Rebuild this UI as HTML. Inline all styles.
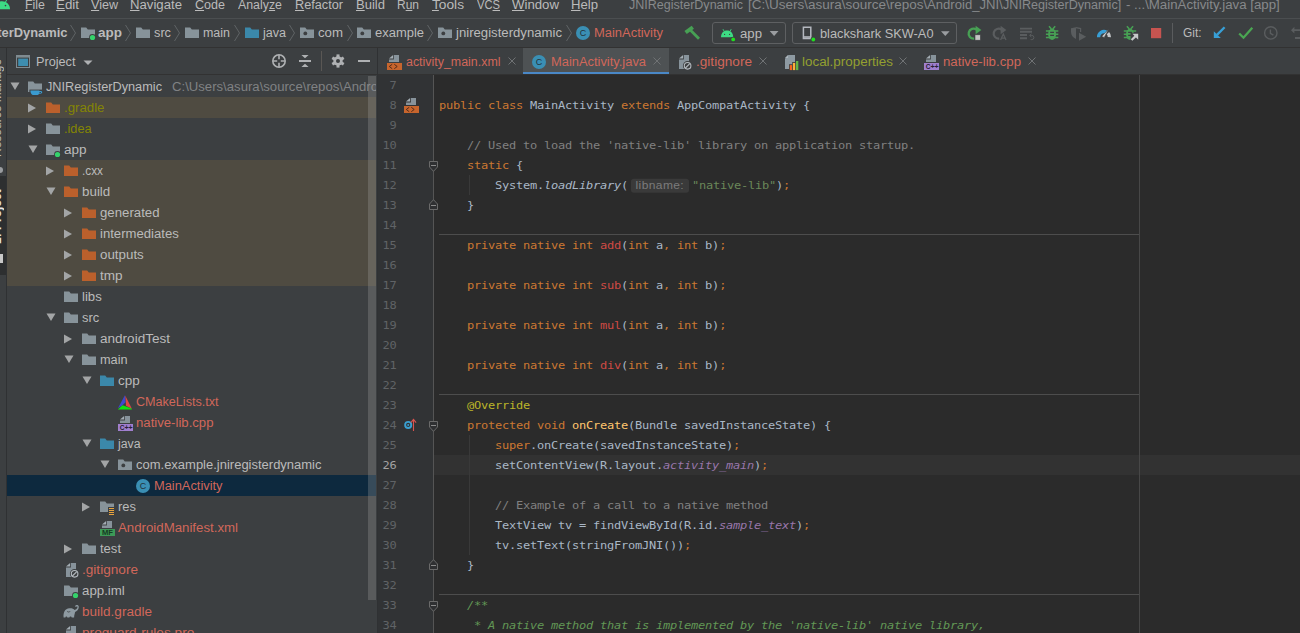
<!DOCTYPE html>
<html lang="en"><head><meta charset="utf-8"><title>JNIRegisterDynamic - MainActivity.java</title>
<style>
*{box-sizing:border-box}
html,body{margin:0;padding:0;background:#3c3f41;}
html{width:1300px;height:633px;overflow:hidden}
body{width:1300px;height:633px;overflow:hidden;position:relative;font-family:"Liberation Sans", sans-serif;font-size:12px;color:#bbbbbb}
.root{position:absolute;left:0;top:0;width:1300px;height:633px;overflow:hidden;contain:strict}
.abs{position:absolute}
.i{position:absolute;display:block;overflow:hidden}
.t{position:absolute;white-space:pre;transform-origin:0 50%;line-height:20px;height:20px}
.t.rel{position:absolute}
.t u{text-decoration:underline;text-underline-offset:1px;text-decoration-thickness:1px}
.vt{position:absolute;white-space:nowrap;font-size:12px;color:#bbbbbb;writing-mode:vertical-rl;transform:rotate(180deg);text-align:center;line-height:14px;width:14px;display:block;overflow:hidden}
.combo{border:1px solid #5e6062;border-radius:3px;background:#3c3f41}
.ln{position:absolute;left:0;width:18.6px;text-align:right;font-family:"DejaVu Sans Mono", "Liberation Mono", monospace;font-size:12px;letter-spacing:-0.224px;line-height:20px;height:20px;color:#606366;transform:scaleY(.93);transform-origin:0 14px}
.ln.cur{color:#a4a3a3}
.cl{position:absolute;left:61px;margin:0;font-family:"DejaVu Sans Mono", "Liberation Mono", monospace;font-size:12px;letter-spacing:-0.224px;line-height:20px;height:20px;color:#a9b7c6;white-space:pre;transform:scaleY(.93);transform-origin:0 14px}
.k{color:#cc7832}.c{color:#808080}.s{color:#6a8759}.it{font-style:italic}.er{color:#cf4a44}
.an{color:#bbb529}.m{color:#ffc66d}.sf{color:#9876aa;font-style:italic}.d{color:#629755;font-style:italic}
.hint{display:inline-block;font-family:"Liberation Sans", sans-serif;font-size:12px;letter-spacing:0.4px;color:#7c7c7c;background:#3a3a3a;border-radius:3px;line-height:15px;height:15px;padding:0 0 0 4.5px;margin:0 3px;width:58px;vertical-align:baseline;position:relative;top:-0.5px}
</style></head>
<body>
<div class="root">
<div class="abs" style="left:0;top:0;width:1300px;height:633px;background:#3c3f41"></div>
<svg class="i" style="left:0;top:0" width="12" height="10" viewBox="0 0 12 10"><path d="M-6 9.2 C-6 4.5 -2.5 1.2 2 1.2 C6.5 1.2 10 4.5 10 9.2z" fill="#3ddc84"/><path d="M5.2 2.6 L7.2 -1" stroke="#3ddc84" stroke-width="1"/><circle cx="5.5" cy="5.6" r=".8" fill="#3c3f41"/></svg>
<span class="t" style="left:25px;top:-5px;font-size:12px;transform:scaleX(1.0331);"><u>F</u>ile</span>
<span class="t" style="left:56px;top:-5px;font-size:12px;transform:scaleX(1.1109);"><u>E</u>dit</span>
<span class="t" style="left:91px;top:-5px;font-size:12px;transform:scaleX(1.0460);"><u>V</u>iew</span>
<span class="t" style="left:130px;top:-5px;font-size:12px;transform:scaleX(1.0976);"><u>N</u>avigate</span>
<span class="t" style="left:195px;top:-5px;font-size:12px;transform:scaleX(1.0452);"><u>C</u>ode</span>
<span class="t" style="left:238px;top:-5px;font-size:12px;transform:scaleX(1.0300);">Analy<u>z</u>e</span>
<span class="t" style="left:295px;top:-5px;font-size:12px;transform:scaleX(1.0582);"><u>R</u>efactor</span>
<span class="t" style="left:356px;top:-5px;font-size:12px;transform:scaleX(1.0860);"><u>B</u>uild</span>
<span class="t" style="left:397px;top:-5px;font-size:12px;transform:scaleX(0.9979);">R<u>u</u>n</span>
<span class="t" style="left:432px;top:-5px;font-size:12px;transform:scaleX(1.1422);"><u>T</u>ools</span>
<span class="t" style="left:477px;top:-5px;font-size:12px;transform:scaleX(0.9316);">VC<u>S</u></span>
<span class="t" style="left:512px;top:-5px;font-size:12px;transform:scaleX(1.1010);"><u>W</u>indow</span>
<span class="t" style="left:571px;top:-5px;font-size:12px;transform:scaleX(1.0937);"><u>H</u>elp</span>
<span class="t" style="left:628.7px;top:-5px;font-size:12px;color:#87898b;transform:scaleX(1.0424);">JNIRegisterDynamic</span>
<span class="t" style="left:747.8px;top:-5px;font-size:12px;color:#87898b;transform:scaleX(1.1242);">[C:\Users\asura\source\repos\</span>
<span class="t" style="left:927px;top:-5px;font-size:12px;color:#87898b;transform:scaleX(1.0926);">Android_JNI\</span>
<span class="t" style="left:1002.8px;top:-5px;font-size:12px;color:#87898b;transform:scaleX(1.0488);">JNIRegisterDynamic]</span>
<span class="t" style="left:1126px;top:-5px;font-size:12px;color:#87898b;transform:scaleX(1.1044);">- ...\MainActivity.java [app]</span>
<div class="abs" style="left:0;top:18px;width:1300px;height:1px;background:#4b4e50"></div>
<span class="t" style="left:-58.5px;top:23px;font-size:12px;font-weight:bold;transform:scaleX(1.0752);">JNIRegisterDynamic</span>
<svg class="i" style="left:69px;top:24px" width="8" height="18" viewBox="0 0 8 18"><path d="M1.5 1 L6.5 9 L1.5 17" fill="none" stroke="#5f6365" stroke-width="1"/></svg>
<svg class="i" style="left:80px;top:25px" width="16" height="16" viewBox="0 0 16 16"><path d="M1 2.5h5.2l1.6 2H15v8.6H1z" fill="#87939a"/><circle cx="12.5" cy="12.5" r="3.4" fill="#3c3f41"/><circle cx="12.5" cy="12.5" r="2.6" fill="#34d36b"/></svg>
<span class="t" style="left:98px;top:23px;font-size:12px;font-weight:bold;transform:scaleX(1.1245);">app</span>
<svg class="i" style="left:124px;top:24px" width="8" height="18" viewBox="0 0 8 18"><path d="M1.5 1 L6.5 9 L1.5 17" fill="none" stroke="#5f6365" stroke-width="1"/></svg>
<svg class="i" style="left:135px;top:25px" width="16" height="16" viewBox="0 0 16 16"><path d="M1 2.5h5.2l1.6 2H15v8.6H1z" fill="#87939a"/></svg>
<span class="t" style="left:154px;top:23px;font-size:12px;transform:scaleX(1.0625);">src</span>
<svg class="i" style="left:173px;top:24px" width="8" height="18" viewBox="0 0 8 18"><path d="M1.5 1 L6.5 9 L1.5 17" fill="none" stroke="#5f6365" stroke-width="1"/></svg>
<svg class="i" style="left:184px;top:25px" width="16" height="16" viewBox="0 0 16 16"><path d="M1 2.5h5.2l1.6 2H15v8.6H1z" fill="#87939a"/></svg>
<span class="t" style="left:203px;top:23px;font-size:12px;transform:scaleX(1.0378);">main</span>
<svg class="i" style="left:233px;top:24px" width="8" height="18" viewBox="0 0 8 18"><path d="M1.5 1 L6.5 9 L1.5 17" fill="none" stroke="#5f6365" stroke-width="1"/></svg>
<svg class="i" style="left:244px;top:25px" width="16" height="16" viewBox="0 0 16 16"><path d="M1 2.5h5.2l1.6 2H15v8.6H1z" fill="#3b88aa"/></svg>
<span class="t" style="left:263px;top:23px;font-size:12px;transform:scaleX(1.0447);">java</span>
<svg class="i" style="left:288px;top:24px" width="8" height="18" viewBox="0 0 8 18"><path d="M1.5 1 L6.5 9 L1.5 17" fill="none" stroke="#5f6365" stroke-width="1"/></svg>
<svg class="i" style="left:299px;top:25px" width="16" height="16" viewBox="0 0 16 16"><path d="M1 2.5h5.2l1.6 2H15v8.6H1z" fill="#87939a"/><circle cx="6.3" cy="8.4" r="1.9" fill="#3c3f41"/></svg>
<span class="t" style="left:318px;top:23px;font-size:12px;transform:scaleX(1.1027);">com</span>
<svg class="i" style="left:346px;top:24px" width="8" height="18" viewBox="0 0 8 18"><path d="M1.5 1 L6.5 9 L1.5 17" fill="none" stroke="#5f6365" stroke-width="1"/></svg>
<svg class="i" style="left:356px;top:25px" width="16" height="16" viewBox="0 0 16 16"><path d="M1 2.5h5.2l1.6 2H15v8.6H1z" fill="#87939a"/><circle cx="6.3" cy="8.4" r="1.9" fill="#3c3f41"/></svg>
<span class="t" style="left:375px;top:23px;font-size:12px;transform:scaleX(1.0803);">example</span>
<svg class="i" style="left:426px;top:24px" width="8" height="18" viewBox="0 0 8 18"><path d="M1.5 1 L6.5 9 L1.5 17" fill="none" stroke="#5f6365" stroke-width="1"/></svg>
<svg class="i" style="left:437px;top:25px" width="16" height="16" viewBox="0 0 16 16"><path d="M1 2.5h5.2l1.6 2H15v8.6H1z" fill="#87939a"/><circle cx="6.3" cy="8.4" r="1.9" fill="#3c3f41"/></svg>
<span class="t" style="left:456px;top:23px;font-size:12px;transform:scaleX(1.0961);">jniregisterdynamic</span>
<svg class="i" style="left:565px;top:24px" width="8" height="18" viewBox="0 0 8 18"><path d="M1.5 1 L6.5 9 L1.5 17" fill="none" stroke="#5f6365" stroke-width="1"/></svg>
<svg class="i" style="left:575px;top:25px" width="16" height="16" viewBox="0 0 16 16"><circle cx="8" cy="8" r="7" fill="#3a8fb4"/><text x="8" y="11.3" text-anchor="middle" font-family='"Liberation Sans",sans-serif' font-size="9" fill="#23323a">C</text></svg>
<span class="t" style="left:594px;top:23px;font-size:12px;color:#d1675a;transform:scaleX(1.0779);">MainActivity</span>
<div class="abs combo" style="left:712px;top:22px;width:74px;height:22px"></div>
<div class="abs combo" style="left:792px;top:22px;width:165px;height:22px"></div>
<span class="t" style="left:739.5px;top:24px;font-size:12.5px;transform:scaleX(1.0547);">app</span>
<span class="t" style="left:819.5px;top:24px;font-size:12.5px;transform:scaleX(1.0232);">blackshark SKW-A0</span>
<span class="t" style="left:1182.5px;top:23px;font-size:12.5px;transform:scaleX(0.9510);">Git:</span>
<svg class="i" style="left:676px;top:19px" width="624" height="28" viewBox="676 19 624 28">
<path d="M685.6 32.6 L692.8 27.2" stroke="#47a054" stroke-width="3.8"/><path d="M689.8 29.6 L699 38.8" stroke="#47a054" stroke-width="2.8"/>
<path d="M721 37.2 C721 33.2 723.6 30.6 727.1 30.6 C730.6 30.6 733.2 33.2 733.2 37.2z" fill="#3ddc84"/>
<path d="M724.4 31.6 L723 29.2 M729.8 31.6 L731.2 29.2" stroke="#3ddc84" stroke-width=".9"/>
<circle cx="724.6" cy="34.4" r=".6" fill="#3c3f41"/><circle cx="729.6" cy="34.4" r=".6" fill="#3c3f41"/>
<circle cx="733.2" cy="39.4" r="2.7" fill="#3c3f41"/><circle cx="733.2" cy="39.4" r="1.9" fill="#1fe01f"/>
<path d="M769.7 31 H778.5 L774.1 36z" fill="#9a9da0"/>
<path d="M803.4 27.2 H810.8 V38.6 H803.4z" fill="none" stroke="#b4b8bf" stroke-width="1.5"/><path d="M803 37 H811" stroke="#b4b8bf" stroke-width="1.6"/>
<circle cx="813.3" cy="39.5" r="2.7" fill="#3c3f41"/><circle cx="813.3" cy="39.5" r="1.9" fill="#1fe01f"/>
<path d="M941 31.2 H949.6 L945.3 36z" fill="#9a9da0"/>
<path d="M976.6 29.6 A5 5 0 1 0 974.2 38.6" fill="none" stroke="#47a054" stroke-width="2.3"/><path d="M975.6 25.8 L981.4 30 L975.6 34.2z" fill="#47a054"/>
<rect x="975" y="34.8" width="5.4" height="5.4" fill="#c4c4c4" stroke="#3c3f41" stroke-width=".6"/>
<path d="M1001.6 29.6 A5 5 0 1 0 999.2 38.6" fill="none" stroke="#5a5d5f" stroke-width="2.2"/><path d="M1000.6 25.8 L1006.4 30 L1000.6 34.2z" fill="#5a5d5f"/>
<path d="M1000.6 40 L1003.3 34 L1006 40 M1001.6 38.2 H1005" stroke="#5a5d5f" stroke-width="1.3" fill="none"/>
<path d="M1020 28.6 H1032 M1020 31.8 H1032 M1020 35 H1027 M1020 38.2 H1027" stroke="#5a5d5f" stroke-width="1.9"/>
<path d="M1030 35.4 H1031.8 A2 2 0 0 1 1031.8 39.6 H1030.6 M1031.4 33.8 L1029.6 35.4 L1031.4 37" stroke="#5a5d5f" stroke-width="1" fill="none"/>
<g transform="translate(1052.1 34.3) scale(1.0)"><path d="M-3.1 -8.1 L-0.7 -5.3 M3.1 -8.1 L0.7 -5.3" stroke="#47a054" stroke-width="1.5" fill="none"/><path d="M-6.2 -3.4 H6.2 M-6.2 -0.1 H6.2 M-6.2 3.2 H6.2" stroke="#47a054" stroke-width="1.5"/><ellipse cx="0" cy="0" rx="4" ry="5.7" fill="#47a054"/><path d="M-1.9 -1.9 H1.9 M-1.9 1.1 H1.9" stroke="#3c3f41" stroke-width="1.2"/></g>
<path d="M1071 28.2 L1076 27.2 V39 C1073 37.8 1071 35.2 1071 32z" fill="#5a5d5f"/><path d="M1076 27.6 L1080.6 28.6 V32" stroke="#5a5d5f" stroke-width="1.2" fill="none"/>
<path d="M1079 32.8 L1086.2 36.8 L1079 40.8z" fill="#5a5d5f"/>
<path d="M1098.6 37.2 A5.4 5.4 0 0 1 1106.5 32.2" fill="none" stroke="#389fd6" stroke-width="3.3"/>
<path d="M1107.9 33.2 A5.4 5.4 0 0 1 1109.4 37.2" fill="none" stroke="#c4c6c8" stroke-width="3.3"/>
<path d="M1101.8 36.4 L1104.2 37.4 L1108.6 29.2z" fill="#d0d2d4" stroke="#3c3f41" stroke-width=".5"/>
<g transform="translate(1130 34.3) scale(1.0)"><path d="M-3.1 -8.1 L-0.7 -5.3 M3.1 -8.1 L0.7 -5.3" stroke="#47a054" stroke-width="1.5" fill="none"/><path d="M-6.2 -3.4 H6.2 M-6.2 -0.1 H6.2 M-6.2 3.2 H6.2" stroke="#47a054" stroke-width="1.5"/><ellipse cx="0" cy="0" rx="4" ry="5.7" fill="#47a054"/><path d="M-1.9 -1.9 H1.9 M-1.9 1.1 H1.9" stroke="#3c3f41" stroke-width="1.2"/></g>
<path d="M1130.6 32.8 H1140 V42 H1130.6z" fill="#3c3f41"/>
<path d="M1131.6 40 L1136.4 35.4" stroke="#c6c8ca" stroke-width="2.2"/><path d="M1132.4 33.8 H1138.2 V39.8z" fill="#c6c8ca"/>
<rect x="1151" y="28" width="10.2" height="10.2" fill="#c75450"/>
<rect x="1172" y="23" width="1" height="20" fill="#5a5c5e"/>
<path d="M1224.6 27.3 L1217 34.9" stroke="#389fd6" stroke-width="2.3"/><path d="M1213.8 31.2 V38.1 H1220.8z" fill="#389fd6"/>
<path d="M1239.2 33.5 L1243.5 37.7 L1252.3 27.7" stroke="#4aa652" stroke-width="2.3" fill="none"/>
<circle cx="1270.8" cy="32.9" r="6.2" fill="none" stroke="#5a5d5f" stroke-width="1.4"/><path d="M1270.4 29.6 V33.3 L1273.4 35.2" stroke="#5a5d5f" stroke-width="1.4" fill="none"/>
<path d="M1291 30.2 L1294.4 26.8 V33.6z" fill="#5a5d5f"/><path d="M1294 30.2 H1300 M1295 38 H1300" stroke="#5a5d5f" stroke-width="1.8"/>
</svg>
<div class="abs" style="left:0;top:47px;width:1300px;height:1px;background:#323232"></div>
<div class="abs" style="left:0;top:48px;width:6px;height:585px;background:#3c3f41;overflow:hidden"><div class="abs" style="left:0;top:128px;width:6px;height:99px;background:#2d2f30"></div><span class="vt" style="top:12px;left:-10px;height:97px">Resource Manager</span><span class="vt" style="top:140px;left:-10px;height:57px;color:#e6e6e6;font-weight:bold">1: Project</span><div class="abs" style="left:-3px;top:119px;width:6px;height:6px;border-radius:3px;background:#9a9da0"></div><div class="abs" style="left:-2px;top:206px;width:5px;height:9px;background:#c8c8c8"></div></div>
<div class="abs" style="left:6px;top:48px;width:1px;height:585px;background:#2f3133"></div>
<svg class="i" style="left:15px;top:54px" width="16" height="16" viewBox="15 54 16 16"><rect x="16.5" y="55.5" width="13" height="12" fill="none" stroke="#7f8b91" stroke-width="1"/><rect x="16" y="55" width="14" height="2.6" fill="#7f8b91"/><rect x="18.2" y="58.6" width="9.8" height="7.4" fill="#3e8eb0"/></svg>
<span class="t" style="left:35.5px;top:51.5px;font-size:12px;transform:scaleX(1.0573);">Project</span>
<svg class="i" style="left:83.0px;top:60.0px" width="10" height="6" viewBox="0 0 10 6"><path d="M0.5 0.5 H9.5 L5.0 5z" fill="#afb1b3"/></svg>
<svg class="i" style="left:256px;top:48px" width="121" height="26" viewBox="256 48 121 26"><circle cx="279" cy="61" r="6.2" fill="none" stroke="#afb1b3" stroke-width="1.6"/><path d="M279 55V59.2M279 62.8V67M273 61H277.2M280.8 61H285" stroke="#afb1b3" stroke-width="1.6"/><path d="M299 61H311" stroke="#afb1b3" stroke-width="2"/><path d="M301.4 55H308.6L305 58.2z M301.4 67H308.6L305 63.8z" fill="#afb1b3"/><rect x="321" y="51" width="1" height="20" fill="#5a5754"/><g fill="#afb1b3"><circle cx="338" cy="61" r="4.7"/><rect x="336.5" y="54.4" width="3" height="3.4" transform="rotate(0 338 61)"/><rect x="336.5" y="54.4" width="3" height="3.4" transform="rotate(60 338 61)"/><rect x="336.5" y="54.4" width="3" height="3.4" transform="rotate(120 338 61)"/><rect x="336.5" y="54.4" width="3" height="3.4" transform="rotate(180 338 61)"/><rect x="336.5" y="54.4" width="3" height="3.4" transform="rotate(240 338 61)"/><rect x="336.5" y="54.4" width="3" height="3.4" transform="rotate(300 338 61)"/></g><circle cx="338" cy="61" r="2" fill="#3c3f41"/><rect x="358" y="60" width="12" height="2" fill="#afb1b3"/></svg>
<div class="abs" style="left:7px;top:74px;width:370px;height:1px;background:#323232"></div>
<div class="abs" style="left:7px;top:97px;width:369px;height:21px;background:#4f4b41"></div>
<div class="abs" style="left:7px;top:160px;width:369px;height:126px;background:#4f4b41"></div>
<div class="abs" style="left:7px;top:475px;width:369px;height:21px;background:#0d293e"></div>
<svg class="i" style="left:10.0px;top:82.0px" width="10" height="9" viewBox="0 0 10 9"><path d="M0.5 0.5 H9.5 L5.0 8z" fill="#a3a5a6"/></svg>
<svg class="i" style="left:27px;top:78.5px" width="16" height="16" viewBox="0 0 16 16"><path d="M1 2.5h5.2l1.6 2H15v8.6H1z" fill="#87939a"/><path d="M2.4 10.6H16V16H2.4z" fill="#3c3f41"/><path d="M3.4 11.6H12.4V12H13.6C15.8 12 15.8 14.8 13.2 14.8H12.2C11.6 15.8 10.4 16.4 7.9 16.4C5 16.4 3.4 15 3.4 11.6z M12.5 12.9V14H13.4C14.2 14 14.2 12.9 13.4 12.9z" fill="#3a9bd0" fill-rule="evenodd"/></svg>
<span class="t" style="left:46px;top:76.5px;font-size:12px;transform:scaleX(1.0607);">JNIRegisterDynamic</span>
<svg class="i" style="left:27px;top:102.5px" width="10" height="10" viewBox="0 0 10 10"><path d="M1 0.5 L9 5 L1 9.5z" fill="#a3a5a6"/></svg>
<svg class="i" style="left:45px;top:99.5px" width="16" height="16" viewBox="0 0 16 16"><path d="M1 2.5h5.2l1.6 2H15v8.6H1z" fill="#bb602c"/></svg>
<span class="t" style="left:64px;top:97.5px;font-size:12px;color:#848504;transform:scaleX(1.1034);">.gradle</span>
<svg class="i" style="left:27px;top:123.5px" width="10" height="10" viewBox="0 0 10 10"><path d="M1 0.5 L9 5 L1 9.5z" fill="#a3a5a6"/></svg>
<svg class="i" style="left:45px;top:120.5px" width="16" height="16" viewBox="0 0 16 16"><path d="M1 2.5h5.2l1.6 2H15v8.6H1z" fill="#87939a"/></svg>
<span class="t" style="left:64px;top:118.5px;font-size:12px;color:#848504;transform:scaleX(1.0603);">.idea</span>
<svg class="i" style="left:28.0px;top:145.0px" width="10" height="9" viewBox="0 0 10 9"><path d="M0.5 0.5 H9.5 L5.0 8z" fill="#a3a5a6"/></svg>
<svg class="i" style="left:45px;top:141.5px" width="16" height="16" viewBox="0 0 16 16"><path d="M1 2.5h5.2l1.6 2H15v8.6H1z" fill="#87939a"/><circle cx="12.5" cy="12.5" r="3.4" fill="#3c3f41"/><circle cx="12.5" cy="12.5" r="2.6" fill="#34d36b"/></svg>
<span class="t" style="left:64px;top:139.5px;font-size:12px;transform:scaleX(1.1282);">app</span>
<svg class="i" style="left:45px;top:165.5px" width="10" height="10" viewBox="0 0 10 10"><path d="M1 0.5 L9 5 L1 9.5z" fill="#a3a5a6"/></svg>
<svg class="i" style="left:63px;top:162.5px" width="16" height="16" viewBox="0 0 16 16"><path d="M1 2.5h5.2l1.6 2H15v8.6H1z" fill="#bb602c"/></svg>
<span class="t" style="left:82px;top:160.5px;font-size:12px;transform:scaleX(0.9839);">.cxx</span>
<svg class="i" style="left:46.0px;top:187.0px" width="10" height="9" viewBox="0 0 10 9"><path d="M0.5 0.5 H9.5 L5.0 8z" fill="#a3a5a6"/></svg>
<svg class="i" style="left:63px;top:183.5px" width="16" height="16" viewBox="0 0 16 16"><path d="M1 2.5h5.2l1.6 2H15v8.6H1z" fill="#bb602c"/></svg>
<span class="t" style="left:82px;top:181.5px;font-size:12px;transform:scaleX(1.1160);">build</span>
<svg class="i" style="left:63px;top:207.5px" width="10" height="10" viewBox="0 0 10 10"><path d="M1 0.5 L9 5 L1 9.5z" fill="#a3a5a6"/></svg>
<svg class="i" style="left:81px;top:204.5px" width="16" height="16" viewBox="0 0 16 16"><path d="M1 2.5h5.2l1.6 2H15v8.6H1z" fill="#bb602c"/></svg>
<span class="t" style="left:100px;top:202.5px;font-size:12px;transform:scaleX(1.1009);">generated</span>
<svg class="i" style="left:63px;top:228.5px" width="10" height="10" viewBox="0 0 10 10"><path d="M1 0.5 L9 5 L1 9.5z" fill="#a3a5a6"/></svg>
<svg class="i" style="left:81px;top:225.5px" width="16" height="16" viewBox="0 0 16 16"><path d="M1 2.5h5.2l1.6 2H15v8.6H1z" fill="#bb602c"/></svg>
<span class="t" style="left:100px;top:223.5px;font-size:12px;transform:scaleX(1.0937);">intermediates</span>
<svg class="i" style="left:63px;top:249.5px" width="10" height="10" viewBox="0 0 10 10"><path d="M1 0.5 L9 5 L1 9.5z" fill="#a3a5a6"/></svg>
<svg class="i" style="left:81px;top:246.5px" width="16" height="16" viewBox="0 0 16 16"><path d="M1 2.5h5.2l1.6 2H15v8.6H1z" fill="#bb602c"/></svg>
<span class="t" style="left:100px;top:244.5px;font-size:12px;transform:scaleX(1.1124);">outputs</span>
<svg class="i" style="left:63px;top:270.5px" width="10" height="10" viewBox="0 0 10 10"><path d="M1 0.5 L9 5 L1 9.5z" fill="#a3a5a6"/></svg>
<svg class="i" style="left:81px;top:267.5px" width="16" height="16" viewBox="0 0 16 16"><path d="M1 2.5h5.2l1.6 2H15v8.6H1z" fill="#bb602c"/></svg>
<span class="t" style="left:100px;top:265.5px;font-size:12px;transform:scaleX(1.1291);">tmp</span>
<svg class="i" style="left:63px;top:288.5px" width="16" height="16" viewBox="0 0 16 16"><path d="M1 2.5h5.2l1.6 2H15v8.6H1z" fill="#87939a"/></svg>
<span class="t" style="left:82px;top:286.5px;font-size:12px;transform:scaleX(1.0935);">libs</span>
<svg class="i" style="left:46.0px;top:313.0px" width="10" height="9" viewBox="0 0 10 9"><path d="M0.5 0.5 H9.5 L5.0 8z" fill="#a3a5a6"/></svg>
<svg class="i" style="left:63px;top:309.5px" width="16" height="16" viewBox="0 0 16 16"><path d="M1 2.5h5.2l1.6 2H15v8.6H1z" fill="#87939a"/></svg>
<span class="t" style="left:82px;top:307.5px;font-size:12px;transform:scaleX(1.0750);">src</span>
<svg class="i" style="left:63px;top:333.5px" width="10" height="10" viewBox="0 0 10 10"><path d="M1 0.5 L9 5 L1 9.5z" fill="#a3a5a6"/></svg>
<svg class="i" style="left:81px;top:330.5px" width="16" height="16" viewBox="0 0 16 16"><path d="M1 2.5h5.2l1.6 2H15v8.6H1z" fill="#87939a"/></svg>
<span class="t" style="left:100px;top:328.5px;font-size:12px;transform:scaleX(1.1282);">androidTest</span>
<svg class="i" style="left:64.0px;top:355.0px" width="10" height="9" viewBox="0 0 10 9"><path d="M0.5 0.5 H9.5 L5.0 8z" fill="#a3a5a6"/></svg>
<svg class="i" style="left:81px;top:351.5px" width="16" height="16" viewBox="0 0 16 16"><path d="M1 2.5h5.2l1.6 2H15v8.6H1z" fill="#87939a"/></svg>
<span class="t" style="left:100px;top:349.5px;font-size:12px;transform:scaleX(1.0609);">main</span>
<svg class="i" style="left:82.0px;top:376.0px" width="10" height="9" viewBox="0 0 10 9"><path d="M0.5 0.5 H9.5 L5.0 8z" fill="#a3a5a6"/></svg>
<svg class="i" style="left:99px;top:372.5px" width="16" height="16" viewBox="0 0 16 16"><path d="M1 2.5h5.2l1.6 2H15v8.6H1z" fill="#3b88aa"/></svg>
<span class="t" style="left:118px;top:370.5px;font-size:12px;transform:scaleX(1.1209);">cpp</span>
<svg class="i" style="left:117px;top:393.5px" width="16" height="16" viewBox="0 0 16 16"><path d="M7.75 1.4 L0.9 14.2 L5.5 11.2 L8.7 8.3 L8.1 1.5z" fill="#3f48cc"/><path d="M8.2 1.5 L8.9 8 V11.8 L14.9 14.8z" fill="#e04545"/><path d="M0.8 15.4 H15 L14 14.2 L5.5 11.2z" fill="#12e012"/></svg>
<span class="t" style="left:136px;top:391.5px;font-size:12px;color:#d1675a;transform:scaleX(1.0485);">CMakeLists.txt</span>
<svg class="i" style="left:117px;top:414.5px" width="16" height="16" viewBox="0 0 16 16"><path d="M7.9 1H13V8H3V5.4H7.9z" fill="#87939b"/><path d="M7.1 0.9V4.6H3z" fill="#a3adb4"/><rect x="1" y="9" width="15" height="7" fill="#a07fcf"/><text x="2.7" y="15" font-family='"Liberation Sans",sans-serif' font-weight="bold" font-size="6.6" fill="#2a2136">C<tspan x="7.5 11.6" font-size="7" dy="-0.3">++</tspan></text></svg>
<span class="t" style="left:136px;top:412.5px;font-size:12px;color:#d1675a;transform:scaleX(1.0959);">native-lib.cpp</span>
<svg class="i" style="left:82.0px;top:439.0px" width="10" height="9" viewBox="0 0 10 9"><path d="M0.5 0.5 H9.5 L5.0 8z" fill="#a3a5a6"/></svg>
<svg class="i" style="left:99px;top:435.5px" width="16" height="16" viewBox="0 0 16 16"><path d="M1 2.5h5.2l1.6 2H15v8.6H1z" fill="#3b88aa"/></svg>
<span class="t" style="left:118px;top:433.5px;font-size:12px;transform:scaleX(1.0265);">java</span>
<svg class="i" style="left:100.0px;top:460.0px" width="10" height="9" viewBox="0 0 10 9"><path d="M0.5 0.5 H9.5 L5.0 8z" fill="#a3a5a6"/></svg>
<svg class="i" style="left:117px;top:456.5px" width="16" height="16" viewBox="0 0 16 16"><path d="M1 2.5h5.2l1.6 2H15v8.6H1z" fill="#87939a"/><circle cx="6.3" cy="8.4" r="1.9" fill="#3c3f41"/></svg>
<span class="t" style="left:136px;top:454.5px;font-size:12px;transform:scaleX(1.0822);">com.example.jniregisterdynamic</span>
<svg class="i" style="left:135px;top:477.5px" width="16" height="16" viewBox="0 0 16 16"><circle cx="8" cy="8" r="7" fill="#3a8fb4"/><text x="8" y="11.3" text-anchor="middle" font-family='"Liberation Sans",sans-serif' font-size="9" fill="#23323a">C</text></svg>
<span class="t" style="left:154px;top:475.5px;font-size:12px;color:#d1675a;transform:scaleX(1.0701);">MainActivity</span>
<svg class="i" style="left:81px;top:501.5px" width="10" height="10" viewBox="0 0 10 10"><path d="M1 0.5 L9 5 L1 9.5z" fill="#a3a5a6"/></svg>
<svg class="i" style="left:99px;top:498.5px" width="16" height="16" viewBox="0 0 16 16"><path d="M1 2.5h5.2l1.6 2H15v8.6H1z" fill="#87939a"/><rect x="9" y="8" width="7" height="8" fill="#3c3f41"/><path d="M10 9.5h5M10 11.5h5M10 13.5h5M10 15.5h5" stroke="#e8a33d" stroke-width="1"/></svg>
<span class="t" style="left:118px;top:496.5px;font-size:12px;transform:scaleX(1.0737);">res</span>
<svg class="i" style="left:99px;top:519.5px" width="16" height="16" viewBox="0 0 16 16"><path d="M7.9 1H13V8H3V5.4H7.9z" fill="#87939b"/><path d="M7.1 0.9V4.6H3z" fill="#a3adb4"/><rect x="1" y="9" width="15" height="7" fill="#3d9a57"/><text x="8.5" y="15" text-anchor="middle" font-family='"Liberation Sans",sans-serif' font-weight="bold" font-size="6.6" fill="#163a22" textLength="11" lengthAdjust="spacingAndGlyphs">MF</text></svg>
<span class="t" style="left:118px;top:517.5px;font-size:12px;color:#d1675a;transform:scaleX(1.1038);">AndroidManifest.xml</span>
<svg class="i" style="left:63px;top:543.5px" width="10" height="10" viewBox="0 0 10 10"><path d="M1 0.5 L9 5 L1 9.5z" fill="#a3a5a6"/></svg>
<svg class="i" style="left:81px;top:540.5px" width="16" height="16" viewBox="0 0 16 16"><path d="M1 2.5h5.2l1.6 2H15v8.6H1z" fill="#87939a"/></svg>
<span class="t" style="left:100px;top:538.5px;font-size:12px;transform:scaleX(1.0856);">test</span>
<svg class="i" style="left:63px;top:561.5px" width="17" height="17" viewBox="0 0 17 17"><path d="M7.9 1H13V15H3V5.4H7.9z" fill="#87939b"/><path d="M7.1 0.9V4.6H3z" fill="#a3adb4"/><circle cx="11.6" cy="11.8" r="4.7" fill="#3c3f41"/><circle cx="11.6" cy="11.8" r="3.3" fill="none" stroke="#b4babf" stroke-width="1.1"/><path d="M9.4 14 L13.8 9.6" stroke="#b4babf" stroke-width="1.1"/></svg>
<span class="t" style="left:82px;top:559.5px;font-size:12px;color:#d1675a;transform:scaleX(1.1342);">.gitignore</span>
<svg class="i" style="left:63px;top:582.5px" width="16" height="16" viewBox="0 0 16 16"><path d="M1 2.5h5.2l1.6 2H15v8.6H1z" fill="#87939a"/><circle cx="12.5" cy="12.5" r="3.4" fill="#3c3f41"/><circle cx="12.5" cy="12.5" r="2.6" fill="#34d36b"/></svg>
<span class="t" style="left:82px;top:580.5px;font-size:12px;transform:scaleX(1.1063);">app.iml</span>
<svg class="i" style="left:63px;top:603.5px" width="16" height="16" viewBox="0 0 16 16"><path d="M0.6 13.6 C0.1 9 1.6 4.5 6.5 4.3 C9 4.2 10.6 4.6 11.6 6.1 C13.2 5.6 14.5 4.4 14.5 3.1 C14.5 2.1 13.4 1.9 13.2 2.9 L12.1 2.5 C12.5 0.5 15.8 0.5 15.8 3 C15.8 5.6 13.7 7.3 12.1 7.9 C11.8 9.7 11.2 10.7 11.1 13.6 H8.7 C8.7 12.1 6.4 12.1 6.4 13.6 H4.3 C4.3 12.1 2.4 12.1 2.4 13.6z" fill="#8e9aa1"/><path d="M4.2 7.4 C5.2 8.4 6.6 8.2 7.2 7.2" stroke="#3c3f41" stroke-width=".8" fill="none"/></svg>
<span class="t" style="left:82px;top:601.5px;font-size:12px;color:#d1675a;transform:scaleX(1.1282);">build.gradle</span>
<svg class="i" style="left:63px;top:624.5px" width="16" height="16" viewBox="0 0 16 16"><path d="M7.9 1H13V15H3V5.4H7.9z" fill="#87939b"/><path d="M7.1 0.9V4.6H3z" fill="#a3adb4"/><path d="M5 8.5h6M5 10.5h6M5 12.5h4" stroke="#3c3f41" stroke-width="1"/></svg>
<span class="t" style="left:82px;top:622.5px;font-size:12px;color:#d1675a;transform:scaleX(1.1376);">proguard-rules.pro</span>
<div class="abs" style="left:172px;top:76px;width:204px;height:21px;overflow:hidden">
<span class="t rel" style="left:0px;top:0.5px;font-size:12px;color:#808284;transform:scaleX(1.0952);">C:\Users\asura\source\repos\Andro</span>
</div>
<div class="abs" style="left:368px;top:76px;width:8px;height:524px;background:rgba(166,166,166,.28)"></div>
<div class="abs" style="left:377px;top:48px;width:1px;height:585px;background:#2f3133"></div>
<div class="abs" style="left:378px;top:48px;width:922px;height:27px;background:#3c3f41"></div>
<div class="abs" style="left:523px;top:48px;width:146px;height:27px;background:#4e5254"></div>
<div class="abs" style="left:523px;top:72px;width:146px;height:3px;background:#4a88c7"></div>
<svg class="i" style="left:386px;top:54px" width="16" height="16" viewBox="0 0 16 16"><path d="M7.9 1H13V8H3V5.4H7.9z" fill="#87939b"/><path d="M7.1 0.9V4.6H3z" fill="#a3adb4"/><rect x="1" y="9" width="15" height="7" fill="#c7652d"/><path d="M6.2 10.3 L3.3 12.5 L6.2 14.7 M8.3 10.3 L11.2 12.5 L8.3 14.7" stroke="#43261a" stroke-width=".9" fill="none"/></svg>
<span class="t" style="left:406.4px;top:51.5px;font-size:12px;color:#d1675a;transform:scaleX(1.0344);">activity_main.xml</span>
<svg class="i" style="left:508px;top:57px" width="8" height="8" viewBox="0 0 8 8"><path d="M0.5 0.5 L7.5 7.5 M7.5 0.5 L0.5 7.5" stroke="#6f7274" stroke-width="1"/></svg>
<svg class="i" style="left:531px;top:54px" width="16" height="16" viewBox="0 0 16 16"><circle cx="8" cy="8" r="7" fill="#3a8fb4"/><text x="8" y="11.3" text-anchor="middle" font-family='"Liberation Sans",sans-serif' font-size="9" fill="#23323a">C</text></svg>
<span class="t" style="left:551px;top:51.5px;font-size:12px;color:#d1675a;transform:scaleX(1.0736);">MainActivity.java</span>
<svg class="i" style="left:653px;top:57px" width="8" height="8" viewBox="0 0 8 8"><path d="M0.5 0.5 L7.5 7.5 M7.5 0.5 L0.5 7.5" stroke="#6f7274" stroke-width="1"/></svg>
<svg class="i" style="left:676px;top:54px" width="17" height="17" viewBox="0 0 17 17"><path d="M7.9 1H13V15H3V5.4H7.9z" fill="#87939b"/><path d="M7.1 0.9V4.6H3z" fill="#a3adb4"/><circle cx="11.6" cy="11.8" r="4.7" fill="#3c3f41"/><circle cx="11.6" cy="11.8" r="3.3" fill="none" stroke="#b4babf" stroke-width="1.1"/><path d="M9.4 14 L13.8 9.6" stroke="#b4babf" stroke-width="1.1"/></svg>
<span class="t" style="left:696px;top:51.5px;font-size:12px;color:#d1675a;transform:scaleX(1.1342);">.gitignore</span>
<svg class="i" style="left:759px;top:57px" width="8" height="8" viewBox="0 0 8 8"><path d="M0.5 0.5 L7.5 7.5 M7.5 0.5 L0.5 7.5" stroke="#6f7274" stroke-width="1"/></svg>
<svg class="i" style="left:782px;top:54px" width="17" height="17" viewBox="0 0 17 17"><path d="M6.4 1H13V15H3V4.4z" fill="#8e9aa2"/><path d="M6 1V4H3z" fill="#aab4bb"/><path d="M7 10.2H10.2V8H13.2V6.2H17V17H7z" fill="#3c3f41"/><rect x="7.8" y="11.1" width="2.3" height="5" fill="#f26522"/><rect x="10.9" y="8.9" width="2.3" height="7.2" fill="#fbb03b"/><rect x="14" y="7" width="2.3" height="9.1" fill="#62b543"/></svg>
<span class="t" style="left:802px;top:51.5px;font-size:12px;color:#94a030;transform:scaleX(1.1183);">local.properties</span>
<svg class="i" style="left:899px;top:57px" width="8" height="8" viewBox="0 0 8 8"><path d="M0.5 0.5 L7.5 7.5 M7.5 0.5 L0.5 7.5" stroke="#6f7274" stroke-width="1"/></svg>
<svg class="i" style="left:923px;top:54px" width="16" height="16" viewBox="0 0 16 16"><path d="M7.9 1H13V8H3V5.4H7.9z" fill="#87939b"/><path d="M7.1 0.9V4.6H3z" fill="#a3adb4"/><rect x="1" y="9" width="15" height="7" fill="#a07fcf"/><text x="2.7" y="15" font-family='"Liberation Sans",sans-serif' font-weight="bold" font-size="6.6" fill="#2a2136">C<tspan x="7.5 11.6" font-size="7" dy="-0.3">++</tspan></text></svg>
<span class="t" style="left:943px;top:51.5px;font-size:12px;color:#d1675a;transform:scaleX(1.1030);">native-lib.cpp</span>
<svg class="i" style="left:1028px;top:57px" width="8" height="8" viewBox="0 0 8 8"><path d="M0.5 0.5 L7.5 7.5 M7.5 0.5 L0.5 7.5" stroke="#6f7274" stroke-width="1"/></svg>
<div class="abs" style="left:378px;top:74px;width:922px;height:1px;background:#323232"></div>
<div class="abs" style="left:378px;top:75px;width:922px;height:558px;background:#2b2b2b;overflow:hidden"></div>
<div class="abs" style="left:378px;top:75px;width:55px;height:558px;background:#313335"></div>
<div class="abs" style="left:433px;top:75px;width:1px;height:558px;background:#555555"></div>
<div class="abs" style="left:434px;top:455px;width:866px;height:20px;background:#323232"></div>
<div class="abs" style="left:1139px;top:75px;width:1px;height:558px;background:#474747"></div>
<div class="abs" style="left:439px;top:234px;width:700px;height:1px;background:#4d4d4d"></div>
<div class="abs" style="left:439px;top:394px;width:700px;height:1px;background:#4d4d4d"></div>
<div class="abs" style="left:439px;top:594px;width:700px;height:1px;background:#4d4d4d"></div>
<div class="abs" style="left:469px;top:175px;width:1px;height:20px;background:#393939"></div>
<div class="abs" style="left:469px;top:435px;width:1px;height:120px;background:#393939"></div>
<div class="abs" style="left:378px;top:75px;width:922px;height:558px;overflow:hidden">
<div class="ln" style="top:0px">7</div>
<div class="ln" style="top:20px">8</div>
<pre class="cl" style="top:20px"><span class="k">public class </span>MainActivity <span class="k">extends </span>AppCompatActivity {</pre>
<div class="ln" style="top:40px">9</div>
<div class="ln" style="top:60px">10</div>
<pre class="cl" style="top:60px">    <span class="c">// Used to load the &#x27;native-lib&#x27; library on application startup.</span></pre>
<div class="ln" style="top:80px">11</div>
<pre class="cl" style="top:80px">    <span class="k">static </span>{</pre>
<div class="ln" style="top:100px">12</div>
<pre class="cl" style="top:100px">        System.<span class="it">loadLibrary</span>(<span class="hint">libname:</span><span class="s">&quot;native-lib&quot;</span>)<span class="k">;</span></pre>
<div class="ln" style="top:120px">13</div>
<pre class="cl" style="top:120px">    }</pre>
<div class="ln" style="top:140px">14</div>
<div class="ln" style="top:160px">15</div>
<pre class="cl" style="top:160px">    <span class="k">private native int </span><span class="er">add</span>(<span class="k">int </span>a<span class="k">, int </span>b)<span class="k">;</span></pre>
<div class="ln" style="top:180px">16</div>
<div class="ln" style="top:200px">17</div>
<pre class="cl" style="top:200px">    <span class="k">private native int </span><span class="er">sub</span>(<span class="k">int </span>a<span class="k">, int </span>b)<span class="k">;</span></pre>
<div class="ln" style="top:220px">18</div>
<div class="ln" style="top:240px">19</div>
<pre class="cl" style="top:240px">    <span class="k">private native int </span><span class="er">mul</span>(<span class="k">int </span>a<span class="k">, int </span>b)<span class="k">;</span></pre>
<div class="ln" style="top:260px">20</div>
<div class="ln" style="top:280px">21</div>
<pre class="cl" style="top:280px">    <span class="k">private native int </span><span class="er">div</span>(<span class="k">int </span>a<span class="k">, int </span>b)<span class="k">;</span></pre>
<div class="ln" style="top:300px">22</div>
<div class="ln" style="top:320px">23</div>
<pre class="cl" style="top:320px">    <span class="an">@Override</span></pre>
<div class="ln" style="top:340px">24</div>
<pre class="cl" style="top:340px">    <span class="k">protected void </span><span class="m">onCreate</span>(Bundle savedInstanceState) {</pre>
<div class="ln" style="top:360px">25</div>
<pre class="cl" style="top:360px">        <span class="k">super</span>.onCreate(savedInstanceState)<span class="k">;</span></pre>
<div class="ln cur" style="top:380px">26</div>
<pre class="cl" style="top:380px">        setContentView(R.layout.<span class="sf">activity_main</span>)<span class="k">;</span></pre>
<div class="ln" style="top:400px">27</div>
<div class="ln" style="top:420px">28</div>
<pre class="cl" style="top:420px">        <span class="c">// Example of a call to a native method</span></pre>
<div class="ln" style="top:440px">29</div>
<pre class="cl" style="top:440px">        TextView tv = findViewById(R.id.<span class="sf">sample_text</span>)<span class="k">;</span></pre>
<div class="ln" style="top:460px">30</div>
<pre class="cl" style="top:460px">        tv.setText(stringFromJNI())<span class="k">;</span></pre>
<div class="ln" style="top:480px">31</div>
<pre class="cl" style="top:480px">    }</pre>
<div class="ln" style="top:500px">32</div>
<div class="ln" style="top:520px">33</div>
<pre class="cl" style="top:520px">    <span class="d">/**</span></pre>
<div class="ln" style="top:540px">34</div>
<pre class="cl" style="top:540px">    <span class="d"> * A native method that is implemented by the &#x27;native-lib&#x27; native library,</span></pre>
</div>
<svg class="i" style="left:403px;top:97px" width="16" height="16" viewBox="0 0 16 16"><path d="M7.9 1H13V8H3V5.4H7.9z" fill="#87939b"/><path d="M7.1 0.9V4.6H3z" fill="#a3adb4"/><rect x="1" y="9" width="15" height="7" fill="#c7652d"/><path d="M6.2 10.3 L3.3 12.5 L6.2 14.7 M8.3 10.3 L11.2 12.5 L8.3 14.7" stroke="#43261a" stroke-width=".9" fill="none"/></svg>
<svg class="i" style="left:402px;top:417px" width="16" height="16" viewBox="0 0 16 16"><circle cx="6.2" cy="7.9" r="4" fill="#3a9fd0"/><circle cx="6.2" cy="7.9" r="2.1" fill="#313335"/><circle cx="6.2" cy="7.9" r="1" fill="#3a9fd0"/><path d="M11.5 14V3M8.9 5.6 L11.5 2.4 L14.1 5.6" stroke="#d9534f" stroke-width="1.1" fill="none"/></svg>
<svg class="i" style="left:429px;top:161px" width="9" height="11" viewBox="0 0 9 11"><path d="M0.5 0.5 H8.5 V6 L4.5 10.3 L0.5 6z" fill="#2f3032" stroke="#6a6a6a" stroke-width="1"/><path d="M2 4.5h5" stroke="#8a8a8a" stroke-width="1"/></svg>
<svg class="i" style="left:429px;top:199px" width="9" height="11" viewBox="0 0 9 11"><path d="M0.5 10.5 H8.5 V5 L4.5 0.7 L0.5 5z" fill="#2f3032" stroke="#6a6a6a" stroke-width="1"/><path d="M2 6.5h5" stroke="#8a8a8a" stroke-width="1"/></svg>
<svg class="i" style="left:429px;top:421px" width="9" height="11" viewBox="0 0 9 11"><path d="M0.5 0.5 H8.5 V6 L4.5 10.3 L0.5 6z" fill="#2f3032" stroke="#6a6a6a" stroke-width="1"/><path d="M2 4.5h5" stroke="#8a8a8a" stroke-width="1"/></svg>
<svg class="i" style="left:429px;top:559px" width="9" height="11" viewBox="0 0 9 11"><path d="M0.5 10.5 H8.5 V5 L4.5 0.7 L0.5 5z" fill="#2f3032" stroke="#6a6a6a" stroke-width="1"/><path d="M2 6.5h5" stroke="#8a8a8a" stroke-width="1"/></svg>
<svg class="i" style="left:429px;top:601px" width="9" height="11" viewBox="0 0 9 11"><path d="M0.5 0.5 H8.5 V6 L4.5 10.3 L0.5 6z" fill="#2f3032" stroke="#6a6a6a" stroke-width="1"/><path d="M2 4.5h5" stroke="#8a8a8a" stroke-width="1"/></svg>
</div>
</body></html>
